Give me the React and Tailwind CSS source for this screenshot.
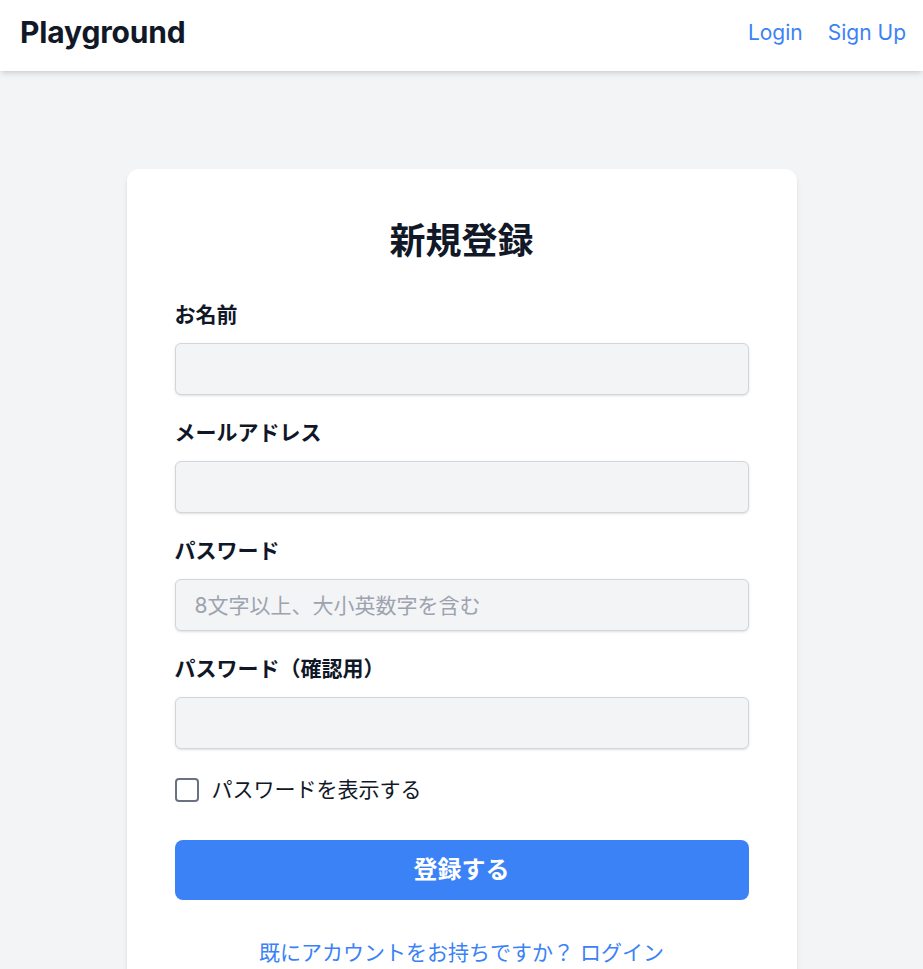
import React from "react";

function Field({ label, placeholder, mb = "mb-6" }) {
  return (
    <div className={mb}>
      <label className="block text-[21px] leading-[28px] font-bold text-gray-900 mb-[14px]">{label}</label>
      <input
        type="text"
        placeholder={placeholder}
        className="block w-full h-[52px] rounded-md border border-gray-300 bg-gray-100 pl-[19px] pr-4 text-[21px] shadow-sm placeholder:text-[#9ca3af] outline-none"
      />
    </div>
  );
}

export default function App() {
  return (
    <div className="min-h-screen bg-[#f3f4f6] [font-family:Inter,'Noto_Sans_CJK_JP',sans-serif]">
      <header className="h-[71px] bg-white shadow-md flex items-center justify-between pl-5 pr-[17px] pb-[6px]">
        <div className="text-[30px] font-bold text-[#111827] tracking-[-0.005em]">Playground</div>
        <nav className="flex items-center gap-[25px] text-[21px] text-[#3b82f6]">
          <a href="#">Login</a>
          <a href="#">Sign Up</a>
        </nav>
      </header>
      <main className="pt-[98px] pb-10">
        <div className="mx-auto w-[670px] bg-white rounded-xl shadow-md px-12 pt-12 pb-4">
          <h1 className="text-center text-[36px] leading-[40px] font-bold text-[#111827] mt-1 mb-10">新規登録</h1>
          <Field label="お名前" />
          <Field label="メールアドレス" />
          <Field label="パスワード" placeholder="8文字以上、大小英数字を含む" />
          <Field label="パスワード（確認用）" mb="mb-[27px]" />
          <label className="flex items-center h-[28px] text-[21px] text-[#111827]">
            <span className="inline-block w-[24px] h-[24px] border-2 border-gray-500 rounded-[4px] mr-[13px] bg-white"></span>
            パスワードを表示する
          </label>
          <button className="mt-[36px] w-full h-[60px] rounded-lg bg-[#3b82f6] text-white text-[24px] font-bold">登録する</button>
          <p className="mt-[37px] text-center text-[21px] text-[#3b82f6]">既にアカウントをお持ちですか？ ログイン</p>
        </div>
      </main>
    </div>
  );
}
